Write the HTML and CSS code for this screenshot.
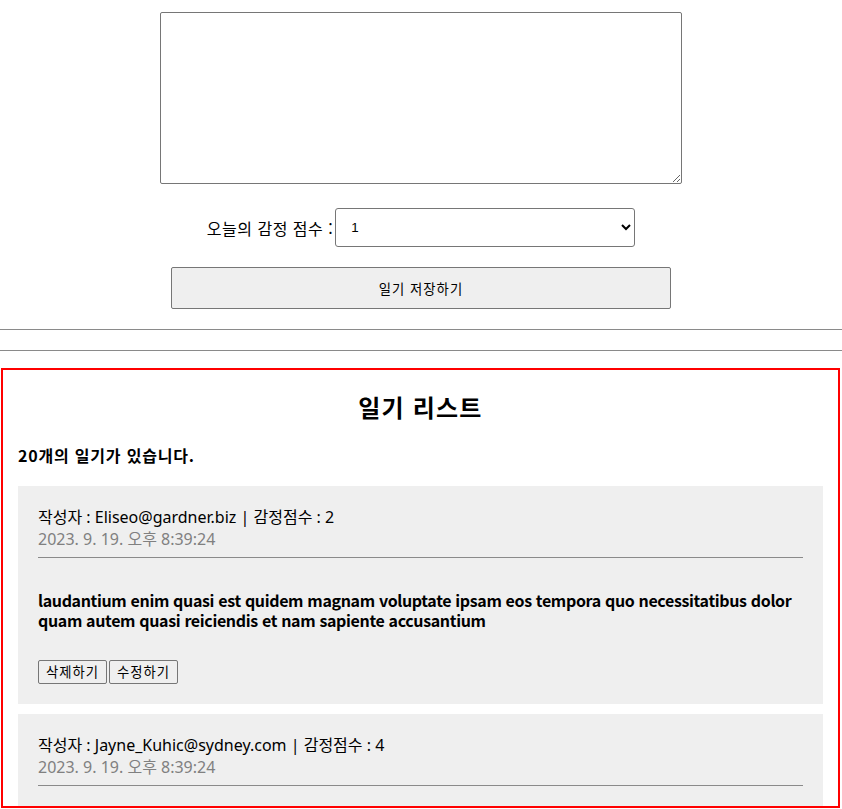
FILE: index.html
```html
<!DOCTYPE html>
<html lang="ko">
<head>
<meta charset="utf-8">
<title>일기장</title>
<link rel="stylesheet" href="styles.css">
</head>
<body>
<div class="editor">
  <textarea class="content-input"></textarea>
  <div class="score-row">
    <span class="score-label">오늘의 감정 점수 :</span>
    <select class="score-select">
      <option>1</option>
      <option>2</option>
      <option>3</option>
      <option>4</option>
      <option>5</option>
    </select>
  </div>
  <button class="save-btn">일기 저장하기</button>
</div>
<hr class="rule rule-first">
<hr class="rule rule-second">
<div class="diary-list">
  <h2 class="list-title">일기 리스트</h2>
  <h4 class="list-count">20개의 일기가 있습니다.</h4>
  <div class="diary-item">
    <div class="info">
      <div class="author">작성자 : Eliseo@gardner.biz | 감정점수 : 2</div>
      <div class="date">2023. 9. 19. 오후 8:39:24</div>
    </div>
    <hr class="item-rule">
    <div class="content">laudantium enim quasi est quidem magnam voluptate ipsam eos tempora quo necessitatibus dolor quam autem quasi reiciendis et nam sapiente accusantium</div>
    <div class="actions">
      <button class="small-btn">삭제하기</button><button class="small-btn">수정하기</button>
    </div>
  </div>
  <div class="diary-item">
    <div class="info">
      <div class="author">작성자 : Jayne_Kuhic@sydney.com | 감정점수 : 4</div>
      <div class="date">2023. 9. 19. 오후 8:39:24</div>
    </div>
    <hr class="item-rule">
  </div>
</div>
</body>
</html>
```
FILE: styles.css
```css
html, body {
  margin: 0;
  padding: 0;
  background: #ffffff;
}

body {
  font-family: "Noto Sans", "Noto Sans CJK KR", sans-serif;
  font-size: 16px;
  color: #000000;
  overflow: hidden;
  height: 809px;
}

.editor {
  display: flex;
  flex-direction: column;
  align-items: center;
}

.content-input {
  box-sizing: border-box;
  width: 522px;
  height: 172px;
  margin: 12px 0 0 0;
  padding: 10px;
  border: 1px solid #767676;
  border-radius: 2px;
  resize: vertical;
  font-family: inherit;
}

.score-row {
  margin-top: 24px;
  display: flex;
  align-items: center;
  height: 39px;
}

.score-label {
  font-size: 16px;
  line-height: 20px;
  letter-spacing: 0.5px;
  margin-right: 2px;
  font-family: "Noto Sans CJK KR", sans-serif;
}

.score-select {
  box-sizing: border-box;
  width: 300px;
  height: 39px;
  padding: 0 6px 0 11px;
  border: 1px solid #767676;
  border-radius: 3px;
  background: #ffffff;
  font-family: "Liberation Sans", Arial, sans-serif;
  font-size: 13.33px;
  color: #000000;
}

.save-btn {
  box-sizing: border-box;
  width: 500px;
  height: 42px;
  margin-top: 20px;
  border: 1px solid #767676;
  border-radius: 2px;
  background: #efefef;
  font-family: "Noto Sans CJK KR", sans-serif;
  font-size: 13.33px;
  letter-spacing: 1px;
  color: #000000;
}

.rule {
  border: 0;
  border-top: 1px solid #8a8a8a;
  height: 0;
  margin: 0;
}

.rule-first {
  margin-top: 20px;
}

.rule-second {
  margin-top: 20px;
}

.diary-list {
  box-sizing: border-box;
  margin: 17px 2px 0 1px;
  height: 440px;
  border: 2px solid #ff0000;
  padding: 0 15px;
  overflow: hidden;
}

.list-title {
  margin: 20px 0 0 0;
  text-align: center;
  font-family: "Noto Sans CJK KR", sans-serif;
  font-size: 24px;
  font-weight: 700;
  line-height: 34px;
  letter-spacing: 1.2px;
}

.list-count {
  margin: 21px 0 20px 0;
  font-family: "Noto Sans CJK KR", sans-serif;
  font-size: 16px;
  font-weight: 700;
  line-height: 21px;
  letter-spacing: 0.8px;
}

.diary-item {
  background: #efefef;
  padding: 20px;
  margin-bottom: 10px;
}

.author {
  font-size: 16px;
  line-height: 22px;
}

.date {
  font-size: 16px;
  line-height: 22px;
  color: #808080;
}

.item-rule {
  border: 0;
  border-top: 1px solid #8a8a8a;
  height: 0;
  margin: 7px 0 0 0;
}

.content {
  margin: 32px 0 30px 0;
  font-family: "Noto Sans CJK KR", sans-serif;
  font-weight: 700;
  font-size: 16px;
  line-height: 20px;
  letter-spacing: -0.35px;
}

.actions {
  display: flex;
  gap: 2px;
}

.small-btn {
  box-sizing: border-box;
  height: 24px;
  padding: 0 7px;
  border: 1px solid #767676;
  border-radius: 2px;
  background: #efefef;
  font-family: "Noto Sans CJK KR", sans-serif;
  font-size: 13.33px;
  line-height: 20px;
  letter-spacing: 1px;
  color: #000000;
}
```
